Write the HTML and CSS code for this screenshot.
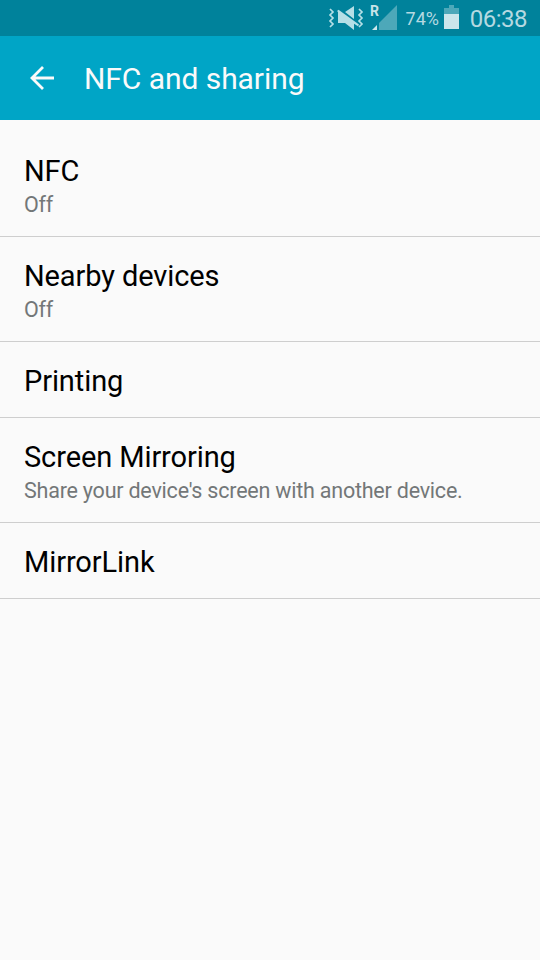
FILE: index.html
```html
<!DOCTYPE html>
<html lang="en">
<head>
<meta charset="utf-8">
<title>NFC and sharing</title>
<link rel="stylesheet" href="styles.css">
</head>
<body>
<div class="status">
  <svg class="mute" width="36" height="36" viewBox="0 0 36 36" aria-hidden="true">
    <path class="fill" d="M17 12l9-6v13zM10.500 9.700L31 24.500l-1 1.700-4-2.500V30l-9-7h-7V12l-1-1z"/>
    <path class="line" d="M2 9l3 3-3 3 3 3-3 3 3 3-3 3M31 9l3 3-3 3 3 3-3 3 3 3-3 3"/>
  </svg>
  <svg class="signal" width="28" height="36" viewBox="0 0 28 36" aria-hidden="true">
    <path class="dim" d="M27 5v25H9v-7z"/><path class="level" d="M7 25v5H2z"/>
    <text x="0" y="16">R</text>
  </svg>
  <span class="percent">74%</span>
  <svg class="battery" width="16" height="36" viewBox="0 0 16 36" aria-hidden="true">
    <path class="dim" d="M5 5h5v3h5v6H0V8h5z"/><path class="level" d="M0 14h15v15H0z"/>
  </svg>
  <span class="clock">06:38</span>
</div>
<header class="bar">
  <svg class="back" width="26" height="26" viewBox="0 0 26 26" aria-hidden="true"><path d="M25 13H4M14 2L3 13l11 11"/></svg>
  <h1>NFC and sharing</h1>
</header>
<main>
  <div class="row"><div class="title">NFC</div><div class="sub">Off</div></div>
  <div class="row"><div class="title">Nearby devices</div><div class="sub">Off</div></div>
  <div class="row"><div class="title">Printing</div></div>
  <div class="row"><div class="title">Screen Mirroring</div><div class="sub">Share your device's screen with another device.</div></div>
  <div class="row"><div class="title">MirrorLink</div></div>
</main>
</body>
</html>
```
FILE: styles.css
```css
* { box-sizing: border-box; }
body { margin: 0; min-height: 960px; background: #fafafa; font-family: Roboto, sans-serif; color: #000; }
.status { height: 36px; display: flex; align-items: center; justify-content: flex-end; padding-right: 13px; background: #00829b; color: #b5d9e1; }
.fill { fill: #b5dfe6; }
.level { fill: #cce6eb; }
.dim { fill: #4da8b9; }
.line { fill: none; stroke: #b5dfe6; stroke-width: 1.7; }
.signal { margin-left: 6px; }
.signal text { font: bold 14px Roboto, sans-serif; fill: #c8e3e8; }
.percent { font-size: 18px; line-height: 22px; margin: 1px 0 0 8px; letter-spacing: -.1px; }
.battery { margin-left: 5px; }
.clock { font-size: 24px; line-height: 28px; margin: 2px 0 0 10px; letter-spacing: -.5px; }
.bar { height: 84px; display: flex; align-items: center; padding-left: 29px; background: #00a5c6; color: #fafafa; }
.back path { fill: none; stroke: #fafafa; stroke-width: 2.8; }
h1 { margin: 2px 0 0 29px; font-size: 30px; font-weight: 400; line-height: 36px; letter-spacing: -.06px; }
main { padding-top: 12px; }
.row { padding: 22px 24px 18px; border-bottom: 1px solid #cecece; }
.title { font-size: 29px; line-height: 35px; letter-spacing: -.1px; }
.sub { padding-top: 3px; font-size: 21.5px; line-height: 26px; letter-spacing: -.22px; color: #737778; }
```
